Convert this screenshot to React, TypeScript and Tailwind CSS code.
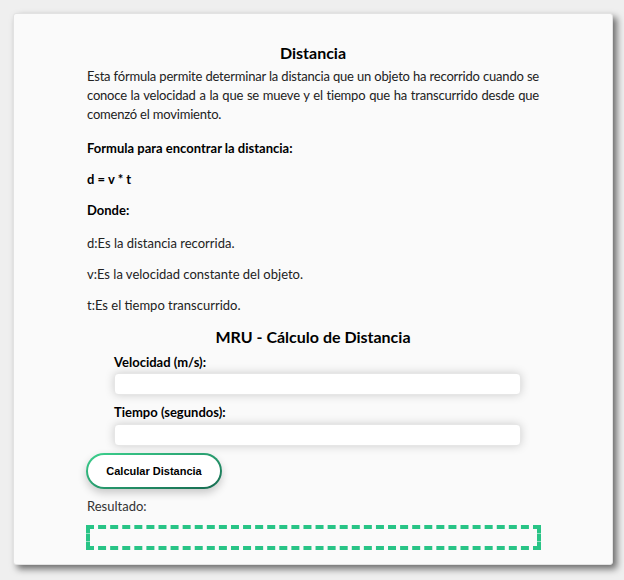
const body = "font-['Lato','Open_Sans',sans-serif]"

export default function App() {
  return (
    <div className={`min-h-[580px] w-[624px] bg-[#efefef] pt-[13px] pl-[13px] ${body}`}>
      <div className="h-[552px] w-[600px] rounded-[3px] border border-[#e2e2e2] bg-[#fafafa] px-[73px] pt-[28px] shadow-[4px_4px_7px_rgba(0,0,0,0.55)]">
        <h2 className="text-center text-[16px] leading-[22px] font-bold text-black">Distancia</h2>
        <p className="mt-[3px] text-justify text-[13px] leading-[19px] tracking-[-0.2px] text-[#222]">
          Esta fórmula permite determinar la distancia que un objeto ha recorrido cuando se conoce la
          velocidad a la que se mueve y el tiempo que ha transcurrido desde que comenzó el movimiento.
        </p>
        <div className="mt-[15px] flex flex-col gap-[13px] text-[13px] leading-[18px] text-[#222]">
          <p className="font-bold text-black">Formula para encontrar la distancia:</p>
          <p className="font-bold text-black">d = v * t</p>
          <p className="font-bold text-black">Donde:</p>
          <p className="mt-[2px]">d:Es la distancia recorrida.</p>
          <p>v:Es la velocidad constante del objeto.</p>
          <p>t:Es el tiempo transcurrido.</p>
        </div>

        <h3 className="mt-[12px] text-center text-[16px] leading-[22px] font-bold text-black">
          MRU - Cálculo de Distancia
        </h3>
        <div className="ml-[27px] w-[407px]">
          <label className="mt-[5px] block text-[13px] leading-[18px] font-bold text-black">Velocidad (m/s):</label>
          <input className="mt-[2px] block h-[22px] w-full rounded-[4px] border border-[#e6e6e6] bg-white shadow-[0_0_10px_rgba(0,0,0,0.18)] outline-none" />
          <label className="mt-[8px] block text-[13px] leading-[18px] font-bold text-black">Tiempo (segundos):</label>
          <input className="mt-[3px] block h-[22px] w-full rounded-[4px] border border-[#e6e6e6] bg-white shadow-[0_0_10px_rgba(0,0,0,0.18)] outline-none" />
        </div>

        <button className="mt-[7px] block -ml-px rounded-full bg-gradient-to-br from-[#3cd28e] to-[#166a50] p-[2px] shadow-[0_4px_8px_rgba(0,0,0,0.2)]">
          <span className="flex h-[32px] w-[132px] items-center justify-center rounded-full bg-white font-['Liberation_Sans',Arial,sans-serif] text-[11px] font-bold text-black">
            Calcular Distancia
          </span>
        </button>

        <p className="mt-[8px] text-[13px] leading-[18px] text-[#333]">Resultado:</p>
        <div className="mt-[10px] -ml-px h-[25px] w-[455px] border-4 border-dashed border-[#28c486]" />
      </div>
    </div>
  )
}
